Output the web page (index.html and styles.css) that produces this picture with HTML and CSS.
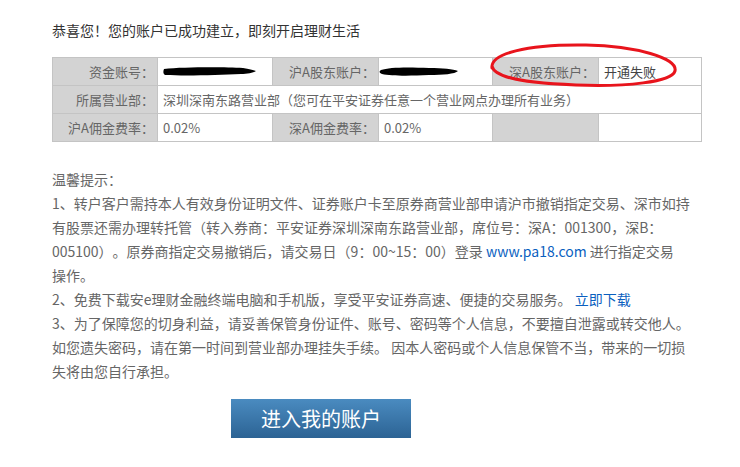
FILE: index.html
```html
<!doctype html>
<html lang="zh-cn">
  <head>
    <meta charset="utf-8">
    <title>开户成功</title>
    <link rel="stylesheet" href="styles.css">
  </head>
  <body>
    <div class="page">
      <h1 class="welcome">恭喜您！您的账户已成功建立，即刻开启理财生活</h1>

      <div class="table-wrap">
        <table class="account-table">
          <colgroup>
            <col class="c1"><col class="c2"><col class="c3"><col class="c4"><col class="c5"><col class="c6">
          </colgroup>
          <tr>
            <td class="label">资金账号：</td>
            <td class="value">
              <svg class="redact" width="94" height="11" viewBox="0 0 94 11"><path d="M1 3 C20 1 60 1 80 2 C86 3 90 4 93 5 C90 7 84 8 78 8 C55 9 25 10 2 9 C0 8 0 5 1 3 Z" fill="#000"/></svg>
            </td>
            <td class="label">沪A股东账户：</td>
            <td class="value">
              <svg class="redact shift" width="80" height="11" viewBox="0 0 80 11"><path d="M2 4 C10 1 30 1 50 2 C64 2 74 3 79 5 C76 8 64 9 50 9 C30 10 12 10 3 8 C0 7 0 5 2 4 Z" fill="#000"/></svg>
            </td>
            <td class="label">深A股东账户：</td>
            <td class="value dark">开通失败</td>
          </tr>
          <tr>
            <td class="label">所属营业部：</td>
            <td class="value" colspan="5">深圳深南东路营业部（您可在平安证券任意一个营业网点办理所有业务）</td>
          </tr>
          <tr>
            <td class="label">沪A佣金费率：</td>
            <td class="value">0.02%</td>
            <td class="label">深A佣金费率：</td>
            <td class="value">0.02%</td>
            <td class="label"></td>
            <td class="value"></td>
          </tr>
        </table>
        <svg class="mark" width="200" height="50" viewBox="0 0 200 50">
          <path d="M6 26 C4 12 40 2 100 3 C150 4 192 16 189 29 C186 40 140 45 90 43 C40 41 8 36 6 24" fill="none" stroke="#e8141c" stroke-width="3" stroke-linecap="round"/>
        </svg>
      </div>

      <div class="tips">
        <p>温馨提示：</p>
        <p>1、转户客户需持本人有效身份证明文件、证券账户卡至原券商营业部申请沪市撤销指定交易、深市如持有股票还需办理转托管（转入券商：平安证券深圳深南东路营业部，席位号：深A：001300，深B：005100）。原券商指定交易撤销后，请交易日（9：00~15：00）登录 <a href="#">www.pa18.com</a> 进行指定交易<span class="keep">操作</span>。</p>
        <p>2、免费下载安e理财金融终端电脑和手机版，享受平安证券高速、便捷的交易服务。 <a href="#">立即下载</a></p>
        <p>3、为了保障您的切身利益，请妥善保管身份证件、账号、密码等个人信息，不要擅自泄露或转交他人。如您遗失密码，请在第一时间到营业部办理挂失手续。 因本人密码或个人信息保管不当，带来的一切损<span class="keep">失将</span>由您自行承担。</p>
      </div>

      <button class="enter-btn">进入我的账户</button>
    </div>
  </body>
</html>
```

FILE: styles.css
```css
body {
  margin: 0;
  padding: 0;
  background: #ffffff;
  font-family: "Noto Sans CJK SC", "Noto Sans", sans-serif;
  color: #666;
  text-spacing-trim: space-all;
}

.page {
  width: 649px;
  padding: 20px 0 0 52px;
}

.welcome {
  margin: 0;
  font-size: 14px;
  font-weight: normal;
  line-height: 20px;
  color: #333;
}

.table-wrap {
  position: relative;
  margin-top: 17px;
}

.account-table {
  width: 649px;
  border-collapse: collapse;
  table-layout: fixed;
  font-size: 13px;
}

.c1 { width: 105px; }
.c2 { width: 115px; }
.c3 { width: 106px; }
.c4 { width: 114px; }
.c5 { width: 106px; }
.c6 { width: 103px; }

.account-table td {
  height: 27px;
  padding: 0 5px;
  border: 1px solid #c4c4c4;
  white-space: nowrap;
  overflow: hidden;
}

.label {
  background-color: #d3d3d3;
  text-align: right;
  color: #666;
  padding-right: 3px !important;
}

.value {
  background-color: #ffffff;
  color: #666;
}

.value.dark {
  color: #444;
}

.redact {
  display: block;
}

.redact.shift {
  margin-left: -5px;
}

.mark {
  position: absolute;
  left: 434px;
  top: -15px;
}

.tips {
  margin-top: 25px;
  font-size: 14px;
  line-height: 24px;
  color: #666;
}

.tips p {
  margin: 0;
}

.tips a {
  color: #0a5fbf;
  text-decoration: none;
}

.keep {
  white-space: nowrap;
}

.enter-btn {
  display: block;
  width: 180px;
  height: 39px;
  margin: 16px 0 0 179px;
  border: none;
  background: linear-gradient(to bottom, #4a8bc0, #2c6394);
  color: #ffffff;
  font-family: "Noto Sans CJK SC", sans-serif;
  font-size: 20px;
  cursor: pointer;
}
```
